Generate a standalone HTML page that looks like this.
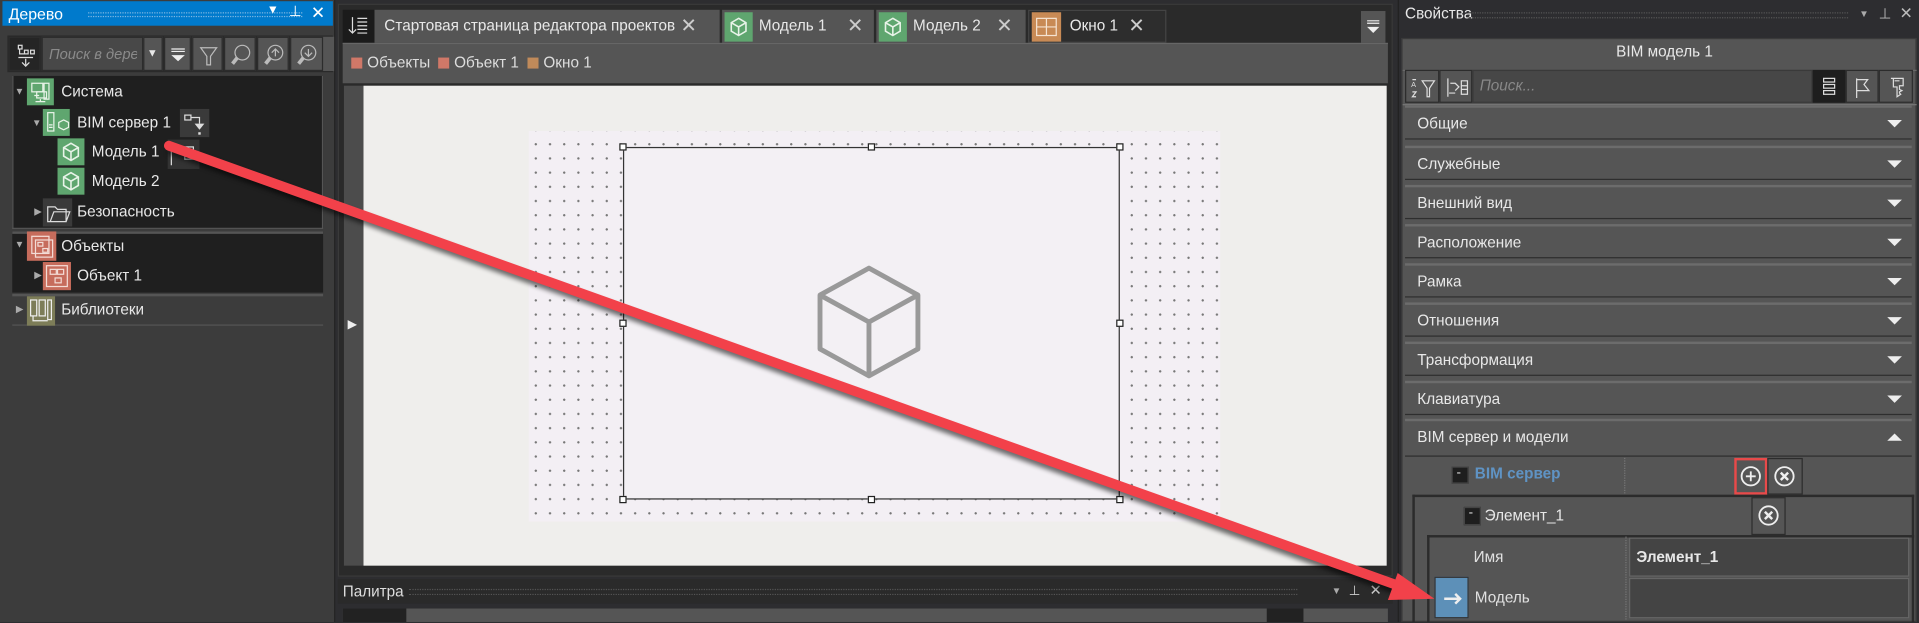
<!DOCTYPE html>
<html><head><meta charset="utf-8">
<style>
*{box-sizing:border-box;margin:0;padding:0}
html,body{width:1919px;height:622px;overflow:hidden;background:#2d2d30}
#r{position:absolute;left:0;top:0;width:1568px;height:508px;transform:scale(1.2239,1.2244);transform-origin:0 0;background:#2d2d30;font-family:"Liberation Sans","DejaVu Sans",sans-serif;font-size:12.5px;color:#e8e8e8}
.a{position:absolute}
.t{position:absolute;white-space:nowrap}
.ico{position:absolute;width:22px;height:22px}
.sec{position:absolute;left:1148px;width:414px;height:28px;background:#555;border-top:2px solid #6c6c6c;border-bottom:1px solid #2e2e2e}
.sec span{position:absolute;left:10px;top:6px}
.sec i{position:absolute;right:8px;top:10px;width:0;height:0;border-left:6px solid transparent;border-right:6px solid transparent;border-top:6px solid #eee}
.btn{position:absolute;background:#555;border:1px solid #2c2c2c}
.dots{background-color:#f3eff4;background-image:radial-gradient(circle,#777 0.8px,transparent 1.1px);background-size:11.6px 11.6px;background-position:0 5px}
.h{position:absolute;width:6px;height:6px;background:#fff;border:1px solid #222}
</style></head><body><div id="r">

<!-- LEFT PANEL -->
<div class="a" style="left:0;top:0;width:274px;height:508px;background:#3c3c3c;border-right:1px solid #222"></div>
<div class="a" style="left:2px;top:1px;width:270px;height:20px;background:#007acc"></div>
<div class="t" style="left:7px;top:4px;color:#fff;font-size:13px">Дерево</div>
<div class="a" style="left:72px;top:10px;width:175px;height:4px;border-top:1px dotted #7fb8e3;border-bottom:1px dotted #7fb8e3"></div>
<div class="t" style="left:218px;top:3px;color:#fff;font-size:10px">▼</div>
<div class="t" style="left:236px;top:2px;color:#fff;font-size:12px">⊥</div>
<div class="t" style="left:254px;top:2px;color:#fff;font-size:14px">✕</div>
<!-- toolbar -->
<div class="a" style="left:6px;top:29px;width:266px;height:30px;background:#2a2a2a"></div>
<div class="btn" style="left:7px;top:30px;width:26px;height:28px;background:#252525"><svg width="26" height="28"><g stroke="#ddd" fill="none" stroke-width="1"><rect x="7" y="6" width="3" height="3"/><rect x="12" y="10" width="3" height="3"/><rect x="17" y="10" width="3" height="3"/><path d="M8 9v4h4M13 17v5M10 20l3 3 3-3M7 16h12"/></g></svg></div>
<div class="a" style="left:34px;top:30px;width:83px;height:28px;background:#484848;border:1px solid #2c2c2c"></div>
<div class="t" style="left:40px;top:37px;color:#8a8a8a;font-style:italic;font-size:12px;width:72px;overflow:hidden">Поиск в дере</div>
<div class="btn" style="left:117px;top:30px;width:16px;height:28px"><div class="t" style="left:2px;top:7px;font-size:9px">▼</div></div>
<div class="btn" style="left:134px;top:30px;width:22px;height:28px"><svg width="22" height="28"><path d="M5 9h11M5 11h11" stroke="#eee"/><path d="M5 14h11l-5.5 5z" fill="#eee"/></svg></div>
<div class="btn" style="left:157px;top:30px;width:25px;height:28px"><svg width="25" height="28"><path d="M6 8h13l-5 7v7h-3v-7z" stroke="#bbb" fill="none"/></svg></div>
<div class="btn" style="left:183px;top:30px;width:26px;height:28px"><svg width="26" height="28"><circle cx="14" cy="12" r="6" stroke="#bbb" fill="none"/><path d="M10 16l-4 5" stroke="#bbb" stroke-width="3"/></svg></div>
<div class="btn" style="left:210px;top:30px;width:26px;height:28px"><svg width="26" height="28"><circle cx="14" cy="12" r="6" stroke="#bbb" fill="none"/><path d="M10 16l-4 5" stroke="#bbb" stroke-width="3"/><path d="M14 15V9M11 12l3-3 3 3" stroke="#bbb" fill="none"/></svg></div>
<div class="btn" style="left:237px;top:30px;width:27px;height:28px"><svg width="26" height="28"><circle cx="14" cy="12" r="6" stroke="#bbb" fill="none"/><path d="M10 16l-4 5" stroke="#bbb" stroke-width="3"/><path d="M14 9v6M11 12l3 3 3-3" stroke="#bbb" fill="none"/></svg></div>
<div class="a" style="left:264px;top:30px;width:9px;height:28px;background:#555"></div>
<!-- tree -->
<div class="a" style="left:10px;top:62px;width:254px;height:125px;background:#1f1f1f;border:1px solid #555;border-top:none"></div>
<div class="a" style="left:10px;top:189px;width:254px;height:50px;background:#1f1f1f;border-top:2px solid #555"></div>
<div class="a" style="left:10px;top:240px;width:254px;height:26px;border-top:2px solid #555;border-bottom:1px solid #555"></div>
<div class="t" style="left:12px;top:70px;font-size:8px;color:#aaa">▼</div>
<div class="ico" style="left:22px;top:64px;background:#5fa66f"><svg width="22" height="22"><g stroke="#e8f3e8" fill="none"><rect x="4" y="4" width="9" height="7"/><rect x="14" y="4" width="4" height="13"/><rect x="8" y="11" width="8" height="5"/><path d="M6 14h4M11 17v2M7 19h8"/></g></svg></div>
<div class="t" style="left:50px;top:68px">Система</div>
<div class="t" style="left:26px;top:96px;font-size:8px;color:#aaa">▼</div>
<div class="ico" style="left:35px;top:89px;background:#5fa66f"><svg width="22" height="22"><g stroke="#e8f3e8" fill="none"><rect x="4" y="3" width="5" height="15"/><path d="M5 13h3M5 15h3"/><path d="M13 11l4-2 4 2v4l-4 2-4-2z"/></g></svg></div>
<div class="t" style="left:63px;top:93px">BIM сервер 1</div>
<div class="a" style="left:147px;top:89px;width:24px;height:23px;background:#3a3a3a"><svg width="24" height="23"><g stroke="#ddd" fill="none"><rect x="4" y="5" width="5" height="4"/><path d="M9 7h7v5"/></g><path d="M12 12h8l-4 5z" fill="#ddd"/><rect x="15" y="19" width="2" height="2" fill="#ddd"/></svg></div>
<div class="ico" style="left:47px;top:113px;background:#5fa66f"><svg width="22" height="22"><g stroke="#e8f3e8" fill="none" stroke-width="1.3"><path d="M11 4l6 3.5v7L11 18l-6-3.5v-7z M5 7.5L11 11l6-3.5M11 11v7"/></g></svg></div>
<div class="t" style="left:75px;top:117px">Модель 1</div>
<div class="a" style="left:137px;top:114px;width:26px;height:24px;background:#333"><svg width="26" height="24"><g stroke="#ddd" fill="none"><path d="M3 3v18"/><rect x="14" y="6" width="7" height="10"/><path d="M14 9h7M14 12h7M7 10h5"/></g></svg></div>
<div class="ico" style="left:47px;top:137px;background:#5fa66f"><svg width="22" height="22"><g stroke="#e8f3e8" fill="none" stroke-width="1.3"><path d="M11 4l6 3.5v7L11 18l-6-3.5v-7z M5 7.5L11 11l6-3.5M11 11v7"/></g></svg></div>
<div class="t" style="left:75px;top:141px">Модель 2</div>
<div class="t" style="left:28px;top:168px;font-size:8px;color:#aaa">▶</div>
<div class="ico" style="left:35px;top:162px;width:24px;height:23px;background:#3a3a3a"><svg width="24" height="23"><path d="M4 7h6l2 2h7v10H4zM6 19l3-8h13l-3 8" stroke="#ddd" fill="none"/></svg></div>
<div class="t" style="left:63px;top:166px">Безопасность</div>
<div class="t" style="left:12px;top:195px;font-size:8px;color:#aaa">▼</div>
<div class="ico" style="left:22px;top:189px;width:24px;height:24px;background:#c66c5c"><svg width="24" height="24"><g stroke="#f3dcd6" fill="none"><rect x="4" y="4" width="14" height="14"/><rect x="7" y="7" width="14" height="14"/><rect x="9" y="9" width="4" height="3"/><rect x="13" y="14" width="4" height="3"/></g></svg></div>
<div class="t" style="left:50px;top:194px">Объекты</div>
<div class="t" style="left:28px;top:220px;font-size:8px;color:#aaa">▶</div>
<div class="ico" style="left:35px;top:214px;width:23px;height:23px;background:#c66c5c"><svg width="23" height="23"><g stroke="#f3dcd6" fill="none"><rect x="3" y="3" width="17" height="17"/><rect x="6" y="6" width="5" height="4"/><rect x="12" y="6" width="5" height="4"/><rect x="10" y="13" width="5" height="4"/></g></svg></div>
<div class="t" style="left:63px;top:218px">Объект 1</div>
<div class="t" style="left:13px;top:248px;font-size:8px;color:#aaa">▶</div>
<div class="ico" style="left:22px;top:242px;width:23px;height:24px;background:#7d7d58"><svg width="23" height="24"><g stroke="#eee" fill="none"><rect x="3" y="3" width="5" height="13"/><rect x="10" y="3" width="5" height="13"/><rect x="17" y="3" width="3" height="16"/><path d="M5 16v4h12"/></g></svg></div>
<div class="t" style="left:50px;top:246px">Библиотеки</div>

<!-- CENTER -->
<div class="a" style="left:276px;top:3px;width:862px;height:468px;background:#2a2a2a;border:1px solid #3a3a3a"></div>
<div class="a" style="left:280px;top:8px;width:26px;height:27px;background:#1b1b1b"><svg width="26" height="27"><g stroke="#ddd" fill="none"><path d="M8 6v13M5 16l3 3 3-3M12 7h8M12 10h8M12 13h8M12 16h8M12 19h8"/></g></svg></div>
<div class="a" style="left:306px;top:8px;width:282px;height:27px;background:#555"></div>
<div class="t" style="left:314px;top:14px">Стартовая страница редактора проектов</div>
<div class="t" style="left:556px;top:11px;font-size:16px;color:#ccc">✕</div>
<div class="a" style="left:590px;top:8px;width:124px;height:27px;background:#555"></div>
<div class="ico" style="left:592px;top:10px;background:#5fa66f;width:23px;height:24px"><svg width="23" height="24"><path d="M11.5 5l6 3.5v7L11.5 19l-6-3.5v-7zM5.5 8.5l6 3.5 6-3.5M11.5 12v7" stroke="#e8f3e8" fill="none" stroke-width="1.3"/></svg></div>
<div class="t" style="left:620px;top:14px">Модель 1</div>
<div class="t" style="left:692px;top:11px;font-size:16px;color:#ccc">✕</div>
<div class="a" style="left:716px;top:8px;width:122px;height:27px;background:#555"></div>
<div class="ico" style="left:718px;top:10px;background:#5fa66f;width:23px;height:24px"><svg width="23" height="24"><path d="M11.5 5l6 3.5v7L11.5 19l-6-3.5v-7zM5.5 8.5l6 3.5 6-3.5M11.5 12v7" stroke="#e8f3e8" fill="none" stroke-width="1.3"/></svg></div>
<div class="t" style="left:746px;top:14px">Модель 2</div>
<div class="t" style="left:814px;top:11px;font-size:16px;color:#ccc">✕</div>
<div class="a" style="left:840px;top:8px;width:113px;height:27px;background:#2d2d2d;border:1px solid #444"></div>
<div class="ico" style="left:843px;top:10px;background:#c88a55;width:24px;height:24px"><svg width="24" height="24"><g stroke="#f5e3d2" fill="none"><rect x="4" y="5" width="16" height="14"/><path d="M12 5v14M4 12h16"/></g></svg></div>
<div class="t" style="left:874px;top:14px">Окно 1</div>
<div class="t" style="left:922px;top:11px;font-size:16px;color:#ccc">✕</div>
<div class="a" style="left:1112px;top:9px;width:20px;height:26px;background:#555"><svg width="20" height="26"><path d="M5 8h10M5 10h10" stroke="#eee"/><path d="M5 13h10l-5 5z" fill="#eee"/></svg></div>
<div class="a" style="left:280px;top:35px;width:854px;height:33px;background:#555;border-top:1px solid #666"></div>
<div class="a" style="left:287px;top:47px;width:9px;height:9px;background:#d07868"></div>
<div class="t" style="left:300px;top:44px;color:#ddd">Объекты</div>
<div class="a" style="left:358px;top:47px;width:9px;height:9px;background:#d07868"></div>
<div class="t" style="left:371px;top:44px;color:#ddd">Объект 1</div>
<div class="a" style="left:431px;top:47px;width:9px;height:9px;background:#c08a5a"></div>
<div class="t" style="left:444px;top:44px;color:#ddd">Окно 1</div>
<div class="a" style="left:281px;top:70px;width:16px;height:392px;background:#4c4c4c"></div>
<div class="t" style="left:284px;top:260px;font-size:10px;color:#eee">▶</div>
<div class="a" style="left:297px;top:70px;width:836px;height:392px;background:#efeeec"></div>
<div class="a dots" style="left:432px;top:107px;width:565px;height:319px"></div>
<div class="a" style="left:509px;top:120px;width:406px;height:288px;background:#f3f0f4;border:1px solid #333"></div>
<div class="h" style="left:506px;top:117px"></div><div class="h" style="left:709px;top:117px"></div><div class="h" style="left:912px;top:117px"></div>
<div class="h" style="left:506px;top:261px"></div><div class="h" style="left:912px;top:261px"></div>
<div class="h" style="left:506px;top:405px"></div><div class="h" style="left:709px;top:405px"></div><div class="h" style="left:912px;top:405px"></div>
<svg class="a" style="left:662px;top:213px" width="96" height="100"><path d="M48 6l40 22v44L48 94 8 72V28zM8 28l40 22 40-22M48 50v44" stroke="#999" stroke-width="4" fill="none" stroke-linejoin="round"/></svg>
<!-- palette -->
<div class="a" style="left:276px;top:473px;width:862px;height:20px;background:#2a2a2a"></div>
<div class="t" style="left:280px;top:476px;color:#ddd;font-size:12.5px">Палитра</div>
<div class="a" style="left:334px;top:481px;width:726px;height:5px;border-top:1px dotted #555;border-bottom:1px dotted #555"></div>
<div class="t" style="left:1088px;top:478px;font-size:8px;color:#aaa">▼</div>
<div class="t" style="left:1102px;top:476px;font-size:11px;color:#ccc">⊥</div>
<div class="t" style="left:1119px;top:475px;font-size:12px;color:#ccc">✕</div>
<div class="a" style="left:280px;top:497px;width:854px;height:11px;background:#555"></div>
<div class="a" style="left:280px;top:497px;width:52px;height:11px;background:#222"></div>
<div class="a" style="left:1035px;top:497px;width:30px;height:11px;background:#222"></div>

<!-- RIGHT PANEL -->
<div class="a" style="left:1142px;top:0;width:426px;height:508px;background:#2d2d30;border-left:1px solid #222"></div>
<div class="t" style="left:1148px;top:4px;color:#e8e8e8">Свойства</div>
<div class="a" style="left:1200px;top:10px;width:310px;height:5px;border-top:1px dotted #555;border-bottom:1px dotted #555"></div>
<div class="t" style="left:1519px;top:7px;font-size:8px;color:#aaa">▼</div>
<div class="t" style="left:1535px;top:4px;font-size:12px;color:#bbb">⊥</div>
<div class="t" style="left:1552px;top:3px;font-size:13px;color:#bbb">✕</div>
<div class="a" style="left:1145px;top:31px;width:421px;height:477px;background:#555;border:1px solid #3a3a3a"></div>
<div class="t" style="left:1310px;top:35px;color:#e8e8e8;width:100px;text-align:center">BIM модель 1</div>
<div class="a" style="left:1146px;top:57px;width:420px;height:1px;background:#6a6a6a"></div>
<div class="btn" style="left:1148px;top:57px;width:28px;height:27px"><svg width="28" height="27"><g stroke="#ddd" fill="none"><path d="M5 7h3M5 17h3l-3 4h3M13 8h10l-4 6v7h-2v-7z"/></g><text x="4" y="13" font-size="6" fill="#ddd">A</text></svg></div>
<div class="btn" style="left:1176px;top:57px;width:27px;height:27px"><svg width="27" height="27"><g stroke="#ddd" fill="none"><path d="M6 6v15M8 10h4l3 3-3 3M17 8h5v11h-5zM17 12h5M17 15h5M12 18H7"/></g></svg></div>
<div class="a" style="left:1203px;top:57px;width:278px;height:27px;background:#474747;border:1px solid #3a3a3a"></div>
<div class="t" style="left:1209px;top:63px;color:#888;font-style:italic">Поиск...</div>
<div class="a" style="left:1481px;top:57px;width:27px;height:27px;background:#1e1e1e"><svg width="27" height="27"><g stroke="#ddd" fill="none"><rect x="9" y="7" width="9" height="3"/><rect x="9" y="12" width="9" height="3"/><rect x="9" y="17" width="9" height="3"/></g></svg></div>
<div class="btn" style="left:1508px;top:57px;width:27px;height:27px"><svg width="27" height="27"><path d="M8 6v16M8 7h9l-3 4 4 5H8" stroke="#ddd" fill="none"/></svg></div>
<div class="btn" style="left:1535px;top:57px;width:28px;height:27px"><svg width="28" height="27"><path d="M9 6h10v6h-3v3l2 1-2 1v1l1 1-3 2v-8h-3V6zM12 8h4" stroke="#ddd" fill="none"/></svg></div>
<div class="a" style="left:1146px;top:85px;width:420px;height:1px;background:#777"></div>
<div class="sec" style="top:86px"><span>Общие</span><i></i></div>
<div class="sec" style="top:119px"><span>Служебные</span><i></i></div>
<div class="sec" style="top:151px"><span>Внешний вид</span><i></i></div>
<div class="sec" style="top:183px"><span>Расположение</span><i></i></div>
<div class="sec" style="top:215px"><span>Рамка</span><i></i></div>
<div class="sec" style="top:247px"><span>Отношения</span><i></i></div>
<div class="sec" style="top:279px"><span>Трансформация</span><i></i></div>
<div class="sec" style="top:311px"><span>Клавиатура</span><i></i></div>
<div class="sec" style="top:342px;height:31px"><span>BIM сервер и модели</span><i style="border-top:none;border-bottom:6px solid #eee"></i></div>
<div class="a" style="left:1186px;top:381px;width:14px;height:14px;background:#1e1e1e;border:1px solid #444"><div class="t" style="left:3px;top:-2px;font-size:11px;color:#ddd">-</div></div>
<div class="t" style="left:1205px;top:380px;color:#5f93c4;font-weight:bold">BIM сервер</div>
<div class="a" style="left:1327px;top:374px;width:1px;height:29px;border-left:1px dotted #777"></div>
<div class="btn" style="left:1417px;top:374px;width:27px;height:30px;background:#555;border:2px solid #e84a4a"><svg width="23" height="26"><circle cx="11.5" cy="13" r="7.5" stroke="#eee" stroke-width="1.5" fill="none"/><path d="M11.5 9v8M7.5 13h8" stroke="#eee" stroke-width="1.5"/></svg></div>
<div class="btn" style="left:1444px;top:374px;width:29px;height:30px"><svg width="27" height="28"><circle cx="13" cy="14" r="7.5" stroke="#eee" stroke-width="1.5" fill="none"/><path d="M10 11l6 6M16 11l-6 6" stroke="#eee" stroke-width="2"/></svg></div>
<div class="a" style="left:1154px;top:404px;width:410px;height:104px;border:2px solid #2b2b2b;border-bottom:none"></div>
<div class="a" style="left:1196px;top:414px;width:14px;height:15px;background:#1e1e1e;border:1px solid #444"><div class="t" style="left:3px;top:-2px;font-size:11px;color:#ddd">-</div></div>
<div class="t" style="left:1213px;top:414px;color:#e8e8e8">Элемент_1</div>
<div class="btn" style="left:1431px;top:406px;width:28px;height:31px"><svg width="26" height="29"><circle cx="13" cy="14" r="7.5" stroke="#eee" stroke-width="1.5" fill="none"/><path d="M10 11l6 6M16 11l-6 6" stroke="#eee" stroke-width="2"/></svg></div>
<div class="a" style="left:1166px;top:437px;width:398px;height:71px;border:2px solid #2b2b2b;border-right:none;border-bottom:none"></div>
<div class="a" style="left:1328px;top:438px;width:1px;height:68px;border-left:1px dotted #777"></div>
<div class="t" style="left:1204px;top:448px;color:#e0e0e0">Имя</div>
<div class="a" style="left:1331px;top:439px;width:229px;height:32px;background:#444;border:1px solid #666"></div>
<div class="t" style="left:1337px;top:448px;color:#e8e8e8;font-weight:bold">Элемент_1</div>
<div class="a" style="left:1331px;top:472px;width:229px;height:33px;background:#444;border:1px solid #666"></div>
<div class="a" style="left:1172px;top:471px;width:28px;height:34px;background:#5d90b8;border:1px solid #333"><svg width="28" height="34"><path d="M7 17h13M16 13l4 4-4 4" stroke="#eee" stroke-width="2" fill="none"/></svg></div>
<div class="t" style="left:1205px;top:481px;color:#e0e0e0">Модель</div>

<svg class="a" style="left:0;top:0" width="1568" height="508">
<defs><filter id="s" x="-5%" y="-5%" width="110%" height="120%"><feGaussianBlur stdDeviation="2"/></filter></defs>
<g filter="url(#s)" opacity="0.55"><path d="M138 122L1148 484" stroke="#000" stroke-width="8"/></g>
<path d="M138 119L1150 481" stroke="#f2414a" stroke-width="8" stroke-linecap="round"/>
<path d="M1172 489L1142 468L1134 490Z" fill="#f2414a"/>
</svg>
</div></body></html>
